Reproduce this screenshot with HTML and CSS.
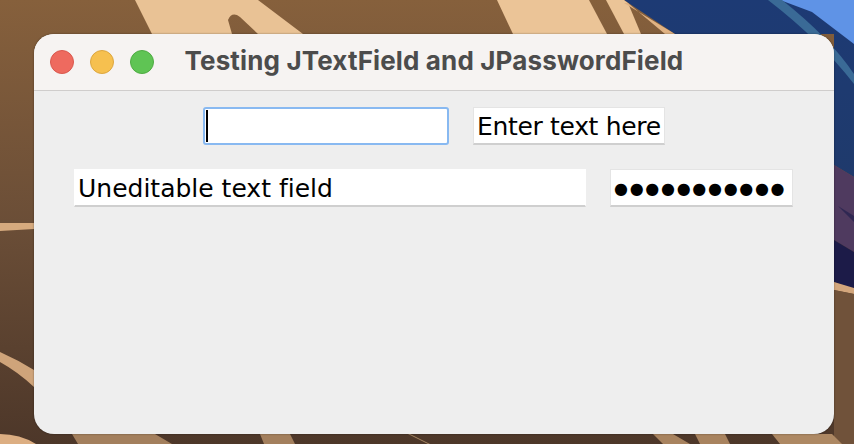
FILE: index.html
```html
<!DOCTYPE html>
<html lang="en">
<head>
    <meta charset="UTF-8">
    <meta name="viewport" content="width=device-width, initial-scale=1.0">
    <title>Testing JTextField and JPasswordField</title>
    <link rel="stylesheet" href="styles.css">
</head>
<body>
    <div class="desktop">
        <!-- wallpaper -->
        <svg class="wallpaper" width="854" height="444" viewBox="0 0 854 444" aria-hidden="true">
            <defs>
                <linearGradient id="sand" x1="0" y1="0" x2="0" y2="1">
                    <stop offset="0" stop-color="#86603c"/>
                    <stop offset="0.5" stop-color="#6b4e37"/>
                    <stop offset="1" stop-color="#4d3729"/>
                </linearGradient>
                <linearGradient id="sky" x1="0" y1="0" x2="0" y2="1">
                    <stop offset="0" stop-color="#1d3a74"/>
                    <stop offset="1" stop-color="#1f3a6c"/>
                </linearGradient>
            </defs>
            <rect width="854" height="444" fill="url(#sand)"/>
            <!-- right side: sky -->
            <polygon points="624,0 854,0 854,177 834,165 834,34 675,34" fill="url(#sky)"/>
            <polygon points="780,0 854,0 854,44 812,12" fill="#5f93e6"/>
            <path d="M768 0 L782 0 Q830 38 854 74 L854 84 Q820 40 768 0 Z" fill="#3a6a96"/>
            <polygon points="834,165 854,177 854,252 834,240" fill="#4f3a5f"/>
            <polygon points="834,240 854,252 854,290 834,282" fill="#1c1b48"/>
            <polygon points="838,206 854,216 854,222" fill="#2f2752"/>
            <polygon points="834,282 854,288 854,294 834,290" fill="#d3a67c"/>
            <polygon points="834,290 854,294 854,444 834,444" fill="#70523a"/>
            <!-- top sand dunes -->
            <path d="M135 0 L258 0 L303 34 L258 34 L240 17 Q232 11 228 20 L232 34 L152 34 Z" fill="#e9c295"/>
            <polygon points="497,0 589,0 607,34 513,34" fill="#ebc497"/>
            <polygon points="606,0 624,0 628,3 641,34 624,34" fill="#ebc497"/>
            <polygon points="624,3 675,34 665,34 628,3" fill="#e0b283"/>
            <!-- left side ripples -->
            <polygon points="0,223 34,223 34,229 0,231" fill="#d6aa7e"/>
            <path d="M0 352 Q18 360 34 370 L34 387 Q18 372 0 362 Z" fill="#cfa47a"/>
            <path d="M0 434 Q20 434 36 444 L0 444 Z" fill="#dcae82"/>
            <!-- bottom ripples -->
            <polygon points="72,434 155,434 172,444 78,444" fill="#a37f5d"/>
            <polygon points="260,434 290,434 295,444 264,444" fill="#a37f5d"/>
            <polygon points="408,434 410,434 430,444 428,444" fill="#a58562"/>
            <polygon points="653,434 673,434 690,444 663,444" fill="#a8835f"/>
            <polygon points="695,434 725,434 730,444 700,444" fill="#a8835f"/>
            <polygon points="772,434 832,434 842,444 780,444" fill="#ad8863"/>
        </svg>

        <div class="window">
            <div class="titlebar">
                <div class="lights">
                    <span class="light red"></span>
                    <span class="light yellow"></span>
                    <span class="light green"></span>
                </div>
                <h1>Testing JTextField and JPasswordField</h1>
            </div>
            <div class="content">
                <div class="row">
                    <div class="field focused"><span class="caret"></span></div>
                    <div class="field enter-text">Enter text here</div>
                </div>
                <div class="row second">
                    <div class="field uneditable">Uneditable text field</div>
                    <div class="field password">●●●●●●●●●●●</div>
                </div>
            </div>
        </div>
    </div>
</body>
</html>
```

FILE: styles.css
```css
body {
    margin: 0;
    padding: 0;
    overflow: hidden;
}
.desktop {
    position: relative;
    width: 854px;
    height: 444px;
    overflow: hidden;
}
.wallpaper {
    position: absolute;
    left: 0;
    top: 0;
}
.window {
    position: absolute;
    left: 34px;
    top: 34px;
    width: 800px;
    height: 400px;
    display: flex;
    flex-direction: column;
    background-color: #eeeeee;
    border-radius: 20px;
    overflow: hidden;
    box-shadow: 0 0 2px rgba(0, 0, 0, 0.45);
}
.titlebar {
    display: grid;
    grid-template-columns: 1fr auto 1fr;
    align-items: center;
    height: 56px;
    padding: 0 16px;
    background-color: #f6f3f2;
    border-bottom: 1px solid #cfcdcc;
}
.titlebar h1 {
    margin: 0 0 3px;
    font-family: Inter, sans-serif;
    font-size: 26px;
    font-weight: 700;
    letter-spacing: 0.14px;
    color: #4c4c4c;
}
.lights {
    display: flex;
    gap: 16px;
}
.light {
    width: 24px;
    height: 24px;
    box-sizing: border-box;
    border-radius: 50%;
    border: 1px solid;
}
.red {
    background-color: #ee6a5f;
    border-color: #d9584e;
}
.yellow {
    background-color: #f6c04f;
    border-color: #dca63f;
}
.green {
    background-color: #5fc454;
    border-color: #4fab43;
}
.content {
    display: flex;
    flex-direction: column;
    gap: 24px;
    padding-top: 16px;
}
.row {
    display: flex;
    justify-content: center;
    gap: 24px;
}
.second {
    padding-right: 1px;
}
.field {
    box-sizing: border-box;
    height: 38px;
    padding-left: 3px;
    background-color: #ffffff;
    border: 1px solid #ffffff;
    border-bottom: 2px solid #cfcfcf;
    font-family: "DejaVu Sans", sans-serif;
    font-size: 25px;
    font-variant-ligatures: none;
    line-height: 38px;
    color: #000000;
    white-space: nowrap;
}
.focused {
    display: flex;
    align-items: center;
    width: 246px;
    padding-left: 1px;
    border: 2px solid #88b9f1;
    border-radius: 3px;
}
.caret {
    width: 2px;
    height: 32px;
    background-color: #000000;
}
.enter-text {
    width: 192px;
    border-color: #e4e4e4 #e4e4e4 #cfcfcf;
    letter-spacing: -0.33px;
}
.uneditable {
    width: 512px;
}
.password {
    width: 183px;
    border-color: #e4e4e4 #e4e4e4 #cfcfcf;
    font-size: 16px;
    letter-spacing: 1.7px;
}
```
